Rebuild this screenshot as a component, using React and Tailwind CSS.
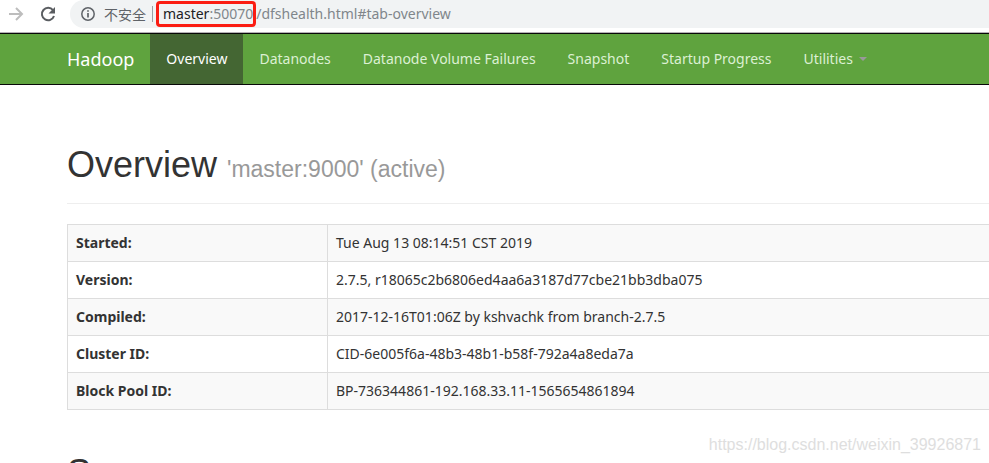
import { useState } from 'react';

const tabs = ['Overview', 'Datanodes', 'Datanode Volume Failures', 'Snapshot', 'Startup Progress'];

const details = [
  { label: 'Started:', value: 'Tue Aug 13 08:14:51 CST 2019' },
  { label: 'Version:', value: '2.7.5, r18065c2b6806ed4aa6a3187d77cbe21bb3dba075' },
  { label: 'Compiled:', value: '2017-12-16T01:06Z by kshvachk from branch-2.7.5' },
  { label: 'Cluster ID:', value: 'CID-6e005f6a-48b3-48b1-b58f-792a4a8eda7a' },
  { label: 'Block Pool ID:', value: 'BP-736344861-192.168.33.11-1565654861894' },
];

function BrowserBar() {
  return (
    <header className="flex h-8 items-start bg-white">
      <button type="button" aria-label="Forward" className="flex h-7 w-8 items-center justify-center text-[#bdbdbd]">
        <svg className="h-4 w-4" viewBox="0 0 16 16" fill="none" stroke="currentColor" strokeWidth="2">
          <path d="M1 8h13M8 2l6 6-6 6" />
        </svg>
      </button>
      <button type="button" aria-label="Reload" className="flex h-7 w-8 items-center justify-center text-[#5a5d61]">
        <svg className="h-4 w-4" viewBox="0 0 16 16" fill="none">
          <path d="M13 4.2A6.2 6.2 0 1 0 14 10" stroke="currentColor" strokeWidth="2" />
          <path d="M15 1v6.5H8.5z" fill="currentColor" />
        </svg>
      </button>
      <div className="ml-1.5 flex h-7 min-w-0 flex-1 items-center rounded-l-full bg-[#f1f3f4] pl-2.5 text-[#5f6368]">
        <svg className="h-4 w-4 shrink-0" viewBox="0 0 16 16" fill="none" stroke="currentColor">
          <circle cx="8" cy="8" r="6.2" strokeWidth="1.5" />
          <path d="M8 7v4.5M8 4.2v1.6" strokeWidth="1.7" />
        </svg>
        <span className="ml-2 shrink-0 font-['Noto_Sans_CJK_SC',sans-serif] text-sm leading-5">不安全</span>
        <span className="ml-1.5 h-4 w-px shrink-0 bg-[#9aa0a6]" />
        <div
          role="textbox"
          aria-label="Address"
          className="ml-[3px] flex items-center whitespace-nowrap text-sm leading-5 text-[#80868b]"
        >
          <span className="rounded-sm border-3 border-[#fb1d13] pl-1">
            <span className="text-[#202124]">master</span>:50070
          </span>
          <span>/dfshealth.html#tab-overview</span>
        </div>
      </div>
    </header>
  );
}

function Navbar({ active, onSelect }) {
  return (
    <nav className="flex border-y border-[#080808] bg-[#5fa33e] pl-[51px] text-sm leading-5 text-[#dcf0d3]">
      <a href="#top" className="px-4 py-[15px] text-lg leading-5 text-white">
        Hadoop
      </a>
      {tabs.map((tab) => (
        <a
          key={tab}
          href="#tab"
          onClick={() => onSelect(tab)}
          className={`whitespace-nowrap px-4 py-[15px] leading-5 ${active === tab ? 'bg-[#446633] text-white' : ''}`}
        >
          {tab}
        </a>
      ))}
      <button type="button" className="flex items-center px-4 py-[15px]">
        Utilities
        <span className="ml-1.5 border-x-4 border-t-4 border-x-transparent border-t-[#999]" />
      </button>
    </nav>
  );
}

export default function App() {
  const [active, setActive] = useState('Overview');

  return (
    <div className="relative h-screen overflow-hidden bg-white font-['Noto_Sans','Noto_Sans_CJK_SC',sans-serif] text-sm text-[#333]">
      <BrowserBar />
      <div className="h-px bg-[#b4b1b5]" />
      <Navbar active={active} onSelect={setActive} />
      <main className="pl-[67px] pt-15">
        <div className="border-b border-[#eee] pb-[14px]">
          <h1 className="font-['Liberation_Sans',sans-serif] text-4xl leading-10">
            Overview <small className="text-[23px] text-[#999]">'master:9000' (active)</small>
          </h1>
        </div>
        <table className="mt-5 w-full border-collapse border border-r-0 border-[#ddd] text-left leading-5">
          <tbody>
            {details.map((row) => (
              <tr key={row.label} className="border-b border-[#ddd] odd:bg-[#f9f9f9]">
                <th className="w-[260px] border-r border-[#ddd] p-2 font-bold">{row.label}</th>
                <td className="p-2">{row.value}</td>
              </tr>
            ))}
          </tbody>
        </table>
        <h2 className="mt-[43px] font-['Liberation_Sans',sans-serif] text-4xl leading-10">Summary</h2>
      </main>
      <span className="absolute right-2 bottom-2 font-['Liberation_Sans',sans-serif] text-base leading-5 text-[#dedede]">
        https://blog.csdn.net/weixin_39926871
      </span>
    </div>
  );
}
